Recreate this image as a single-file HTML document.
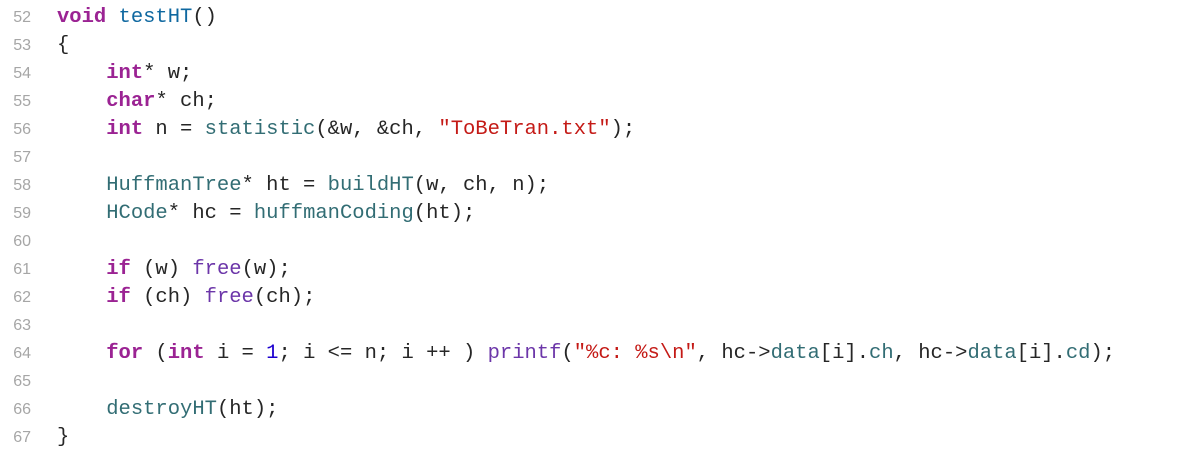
<!DOCTYPE html>
<html><head><style>
body{margin:0;background:#fff;width:1188px;height:452px;overflow:hidden;position:relative}
.l{position:absolute;left:0;width:1188px;height:28px;white-space:pre;margin-top:4px}
.n{position:absolute;left:0;top:0;width:31px;line-height:28px;text-align:right;font:16px/28px "Liberation Sans",sans-serif;color:#a6a6a6}
.c{position:absolute;left:57px;top:0;font:20.5px/28px "Liberation Mono",monospace;color:#262626}
.k{color:#9b2393;font-weight:bold}
.d{color:#0f68a0}
.f{color:#326d74}
.p{color:#6c36a9}
.s{color:#c41a16}
.m{color:#1c00cf}
</style></head><body>
<div class="l" style="top:0"><span class="n">52</span><span class="c"><span class="k">void</span> <span class="d">testHT</span>()</span></div>
<div class="l" style="top:28px"><span class="n">53</span><span class="c">{</span></div>
<div class="l" style="top:56px"><span class="n">54</span><span class="c">    <span class="k">int</span>* w;</span></div>
<div class="l" style="top:84px"><span class="n">55</span><span class="c">    <span class="k">char</span>* ch;</span></div>
<div class="l" style="top:112px"><span class="n">56</span><span class="c">    <span class="k">int</span> n = <span class="f">statistic</span>(&amp;w, &amp;ch, <span class="s">"ToBeTran.txt"</span>);</span></div>
<div class="l" style="top:140px"><span class="n">57</span></div>
<div class="l" style="top:168px"><span class="n">58</span><span class="c">    <span class="f">HuffmanTree</span>* ht = <span class="f">buildHT</span>(w, ch, n);</span></div>
<div class="l" style="top:196px"><span class="n">59</span><span class="c">    <span class="f">HCode</span>* hc = <span class="f">huffmanCoding</span>(ht);</span></div>
<div class="l" style="top:224px"><span class="n">60</span></div>
<div class="l" style="top:252px"><span class="n">61</span><span class="c">    <span class="k">if</span> (w) <span class="p">free</span>(w);</span></div>
<div class="l" style="top:280px"><span class="n">62</span><span class="c">    <span class="k">if</span> (ch) <span class="p">free</span>(ch);</span></div>
<div class="l" style="top:308px"><span class="n">63</span></div>
<div class="l" style="top:336px"><span class="n">64</span><span class="c">    <span class="k">for</span> (<span class="k">int</span> i = <span class="m">1</span>; i &lt;= n; i ++ ) <span class="p">printf</span>(<span class="s">"%c: %s\n"</span>, hc-&gt;<span class="f">data</span>[i].<span class="f">ch</span>, hc-&gt;<span class="f">data</span>[i].<span class="f">cd</span>);</span></div>
<div class="l" style="top:364px"><span class="n">65</span></div>
<div class="l" style="top:392px"><span class="n">66</span><span class="c">    <span class="f">destroyHT</span>(ht);</span></div>
<div class="l" style="top:420px"><span class="n">67</span><span class="c">}</span></div>
</body></html>
